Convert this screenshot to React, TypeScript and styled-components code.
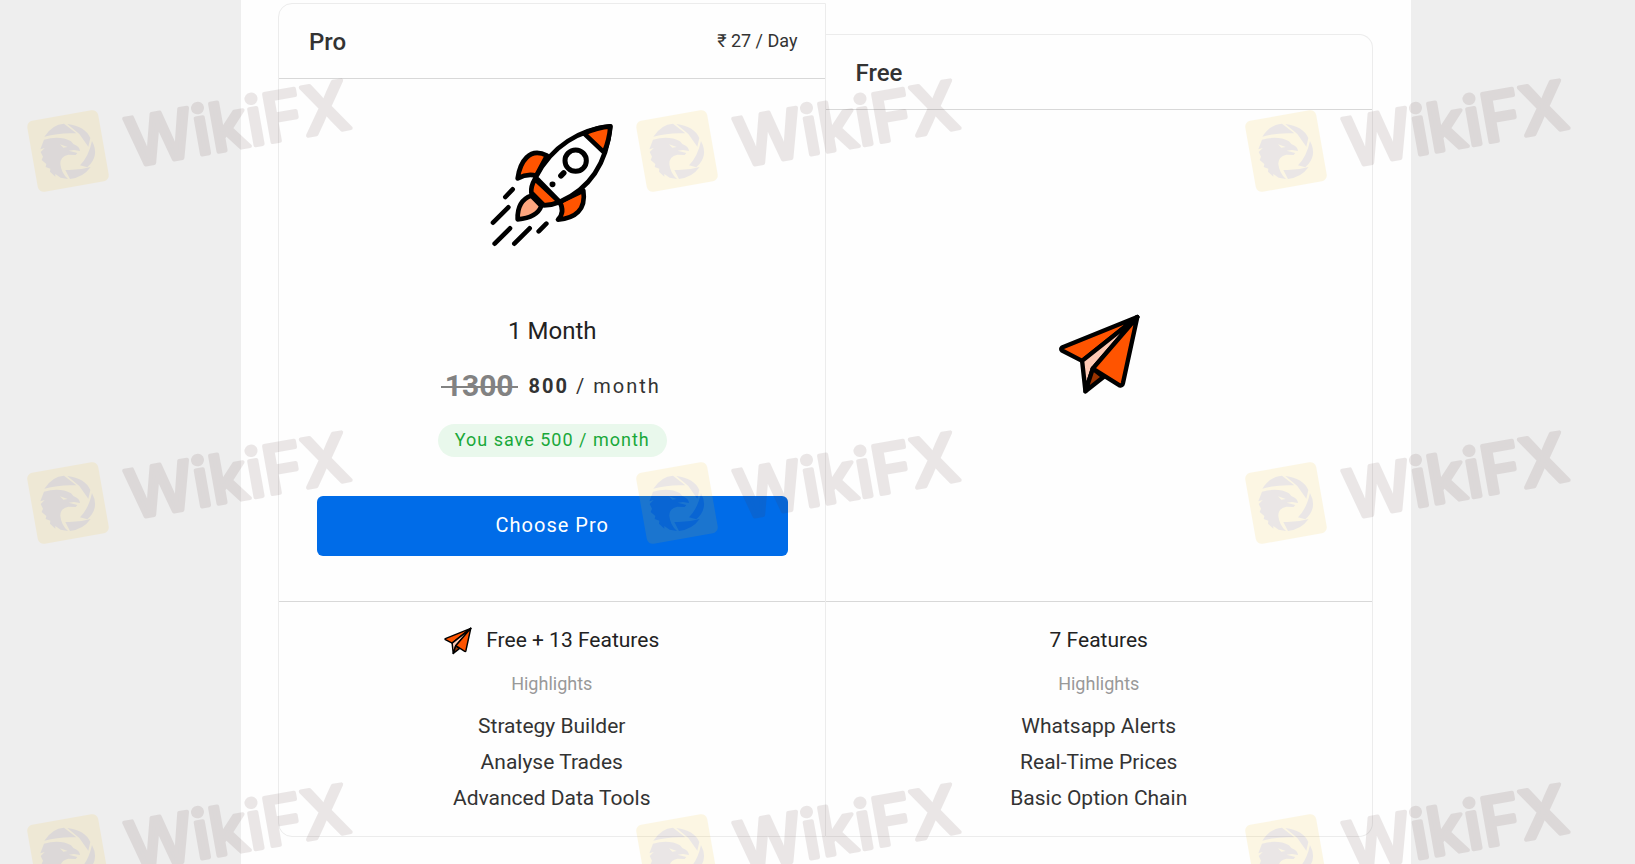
import React from "react";
import styled, { createGlobalStyle } from "styled-components";

const GlobalStyle = createGlobalStyle`
  *, *::before, *::after { box-sizing: border-box; }
  body {
    margin: 0;
    background: #eeeeee;
    font-family: Roboto, "Noto Sans", sans-serif;
    color: #333333;
  }
`;

const Page = styled.div`
  position: relative;
  overflow: hidden;
  min-height: 100vh;
  padding-left: 17px;
  display: flex;
  justify-content: center;
`;

const Container = styled.main`
  flex: 0 1 1170px;
  min-width: 0;
  padding: 3px 38px 28px 37px;
  background: #fefefe;
`;

const Plans = styled.div`
  display: grid;
  grid-template-columns: 1fr 1fr;
  align-items: end;
`;

const Card = styled.section<{ $side: "left" | "right" }>`
  border: 1px solid #ececec;
  border-left-width: ${(p) => (p.$side === "left" ? "1px" : "0")};
  border-radius: ${(p) => (p.$side === "left" ? "14px 0 0 14px" : "0 14px 14px 0")};
`;

const CardHeader = styled.header`
  display: flex;
  align-items: center;
  justify-content: space-between;
  height: 75px;
  padding: 0 27px 0 30px;
  border-bottom: 1px solid #d8d8d8;
`;

const PlanName = styled.h2`
  margin: 0;
  padding-top: 2px;
  font-size: 24px;
  line-height: 32px;
  font-weight: 500;
`;

const DayRate = styled.span`
  font-size: 18px;
  line-height: 24px;
`;

const Offer = styled.div<{ $height: number; $centered?: boolean }>`
  display: flex;
  flex-direction: column;
  align-items: center;
  justify-content: ${(p) => (p.$centered ? "center" : "flex-start")};
  min-height: ${(p) => p.$height}px;
  padding: ${(p) => (p.$centered ? "0 37px 2px 38px" : "43px 37px 44px 38px")};
  border-bottom: 1px solid #d8d8d8;
`;

const Duration = styled.h3`
  margin: 68px 0 0;
  font-size: 24px;
  line-height: 32px;
  font-weight: 400;
  color: #222222;
`;

const PriceRow = styled.p`
  display: flex;
  align-items: center;
  gap: 11px;
  margin: 19px 0 0;
  padding-right: 3px;
  font-size: 20px;
  line-height: 40px;
  letter-spacing: 2px;
`;

const OldPrice = styled.s`
  position: relative;
  padding: 0 4px;
  font-size: 30px;
  font-weight: 700;
  letter-spacing: 0;
  color: #828282;
  text-decoration: none;

  &::after {
    content: "";
    position: absolute;
    left: 0;
    right: 0;
    top: 20px;
    height: 2px;
    background: #828282;
  }
`;

const Saving = styled.p`
  margin: 18px 0 0;
  padding: 0 17px 1px;
  border-radius: 17px;
  background: #e9f8ec;
  color: #19a83a;
  font-size: 18px;
  line-height: 32px;
  letter-spacing: 1px;
`;

const ChooseButton = styled.button`
  width: 100%;
  height: 60px;
  margin: 39px 0 0;
  padding: 0 0 2px;
  border: 0;
  border-radius: 6px;
  background: #006ce8;
  color: #ffffff;
  font-family: inherit;
  font-size: 20px;
  letter-spacing: 1px;
  cursor: pointer;
`;

const Features = styled.div`
  display: flex;
  flex-direction: column;
  align-items: center;
  padding: 23px 20px 20px;
  text-align: center;
`;

const FeatureCount = styled.h4`
  display: flex;
  align-items: flex-end;
  gap: 14px;
  margin: 0;
  font-size: 21px;
  line-height: 30px;
  font-weight: 400;
  color: #222222;
`;

const HighlightsLabel = styled.p`
  margin: 17px 0 0;
  font-size: 18px;
  line-height: 24px;
  color: #999999;
`;

const FeatureList = styled.ul`
  margin: 12px 0 0;
  padding: 0;
  list-style: none;
  font-size: 21px;
  line-height: 36px;
`;

const WatermarkLayer = styled.div`
  position: absolute;
  inset: 0;
  overflow: hidden;
  pointer-events: none;
  display: grid;
  grid-template-columns: repeat(3, 609px);
  grid-auto-rows: 352px;
`;

const Mark = styled.svg`
  width: 400px;
  height: 240px;
  opacity: 0.11;
`;

const RocketIcon = () => (
  <svg width="125" height="125" viewBox="60 50 375 375" fill="none" stroke="#000" strokeWidth="14" strokeLinecap="round" strokeLinejoin="round" aria-hidden="true">
    <path d="M143 219C150 170 178 124 231 151L199 211Q171 204 143 219Z" fill="#ff5400" />
    <path d="M264 343C315 339 349 314 340 256L269 290Q286 320 264 343Z" fill="#ff5400" />
    <path d="M143 342Q141 286 184 271L214 302Q201 337 143 342Z" fill="#ffa67e" />
    <path d="M195 221L269 290Q245 300 222 300L184 262Q182 243 195 221Z" fill="#ff5400" />
    <path d="M421 63C330 72 246 121 197 216L269 290C365 248 411 166 421 63Z" fill="#fefefe" />
    <path d="M421 63Q382 66 342 84L402 141Q418 104 421 63Z" fill="#ff5400" />
    <circle cx="317" cy="166" r="32" strokeWidth="15" />
    <path d="M273 211L281 203M247 237h1" strokeWidth="17" />
    <path d="M106 275L128 252M69 352L115 306M74 415L120 369M133 415L179 369M206 378L229 355" strokeWidth="14" />
  </svg>
);

const PlaneIcon = ({ size }: { size: number }) => (
  <svg width={size} height={size} viewBox="54 40 248 248" stroke="#000" strokeWidth="13" strokeLinecap="round" strokeLinejoin="round" aria-hidden="true">
    <path d="M291 52L66 143Q61 148 66 152L126 183Z" fill="#ff5400" />
    <path d="M291 52L126 183L136 274L158 206Z" fill="#ffc9b4" />
    <path d="M158 206L136 274L190 231Z" fill="#993300" />
    <path d="M291 52L158 206L238 256Q246 258 248 250Z" fill="#ff5400" />
  </svg>
);

const WatermarkMark = () => (
  <Mark viewBox="0 0 400 240">
    <rect x="-36" y="-36" width="72" height="72" rx="6" fill="#f0be14" transform="translate(68 151) rotate(-10)" />
    <g transform="translate(0 60) scale(.3333)" fill="#503232">
      <path d="M133 230Q157 193 192 191L229 220Q180 217 133 230Z" />
      <path d="M202 192Q255 198 271 234L265 260L238 222Z" />
      <path d="M276 243Q300 288 262 322L240 316Q266 290 276 243Z" />
      <path d="M272 321Q250 352 210 357L196 330Q235 332 272 321Z" />
      <path
        fillRule="evenodd"
        d="M132 239Q180 226 213 244L220 252Q240 260 240 273L222 270L206 272L232 279L227 285L205 284Q180 290 181 312Q184 340 204 357L182 353L166 342L166 350L150 335L151 326L137 321L139 312L125 300L129 290L122 276L134 264L121 268ZM180 253L203 261L190 263Z"
      />
    </g>
    <text transform="translate(131 167) rotate(-10)" fontFamily="Inter, sans-serif" fontWeight="500" fontSize="67" fill="#503232" stroke="#503232" strokeWidth="4" strokeLinejoin="round">
      WikiFX
    </text>
  </Mark>
);

const Highlights = ({ items }: { items: string[] }) => (
  <>
    <HighlightsLabel>Highlights</HighlightsLabel>
    <FeatureList>
      {items.map((item) => (
        <li key={item}>{item}</li>
      ))}
    </FeatureList>
  </>
);

export default function App() {
  return (
    <>
      <GlobalStyle />
      <Page>
        <Container>
          <Plans>
            <Card $side="left">
              <CardHeader>
                <PlanName>Pro</PlanName>
                <DayRate>₹ 27 / Day</DayRate>
              </CardHeader>
              <Offer $height={523}>
                <RocketIcon />
                <Duration>1 Month</Duration>
                <PriceRow>
                  <OldPrice>1300</OldPrice>
                  <span>
                    <b>800</b> / month
                  </span>
                </PriceRow>
                <Saving>You save 500 / month</Saving>
                <ChooseButton type="button">Choose Pro</ChooseButton>
              </Offer>
              <Features>
                <FeatureCount>
                  <PlaneIcon size={28} />
                  Free + 13 Features
                </FeatureCount>
                <Highlights items={["Strategy Builder", "Analyse Trades", "Advanced Data Tools"]} />
              </Features>
            </Card>
            <Card $side="right">
              <CardHeader>
                <PlanName>Free</PlanName>
              </CardHeader>
              <Offer $height={492} $centered>
                <PlaneIcon size={83} />
              </Offer>
              <Features>
                <FeatureCount>7 Features</FeatureCount>
                <Highlights items={["Whatsapp Alerts", "Real-Time Prices", "Basic Option Chain"]} />
              </Features>
            </Card>
          </Plans>
        </Container>
        <WatermarkLayer aria-hidden="true">
          {Array.from({ length: 9 }, (_, i) => (
            <WatermarkMark key={i} />
          ))}
        </WatermarkLayer>
      </Page>
    </>
  );
}
